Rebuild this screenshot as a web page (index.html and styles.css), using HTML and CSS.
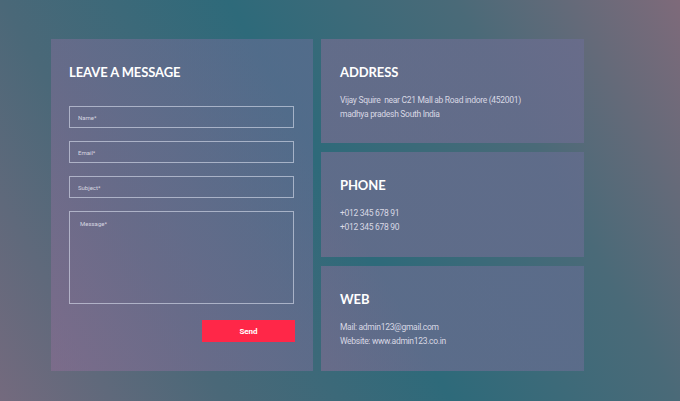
FILE: index.html
```html
<!DOCTYPE html>
<html>
<head>
<meta charset="utf-8">
<link rel="stylesheet" href="styles.css">
</head>
<body>
<div class="page">
  <div class="grid">
    <section class="panel form-panel">
      <h2 class="title">LEAVE A MESSAGE</h2>
      <form class="form">
        <input class="field" type="text" placeholder="Name*">
        <input class="field" type="text" placeholder="Email*">
        <input class="field" type="text" placeholder="Subject*">
        <textarea class="field area" placeholder="Message*"></textarea>
        <div class="actions"><button class="send" type="button">Send</button></div>
      </form>
    </section>
    <div class="side">
      <section class="panel info">
        <h2 class="title">ADDRESS</h2>
        <p class="text">Vijay Squire&nbsp; near C21 Mall ab Road indore (452001)<br>madhya pradesh South India</p>
      </section>
      <section class="panel info">
        <h2 class="title">PHONE</h2>
        <p class="text">+012 345 678 91<br>+012 345 678 90</p>
      </section>
      <section class="panel info">
        <h2 class="title">WEB</h2>
        <p class="text">Mail: admin123@gmail.com<br>Website: www.admin123.co.in</p>
      </section>
    </div>
  </div>
</div>
</body>
</html>
```
FILE: styles.css
```css
* { box-sizing: border-box; }
html, body { margin: 0; height: 100%; }
body {
  font-family: Roboto, "Liberation Sans", sans-serif;
  background: linear-gradient(61deg, #746a7e 0%, #4a6878 25%, #2e6a7a 50%, #4a6a78 75%, #7e6a7a 100%);
  overflow: hidden;
}
.page {
  width: 680px;
  height: 401px;
  padding: 39px 0 0 51px;
}
.grid {
  display: grid;
  grid-template-columns: 262px 263px;
  column-gap: 8px;
  height: 332px;
}
.panel {
  background: linear-gradient(60deg, rgba(140,110,150,0.55), rgba(110,110,155,0.5));
}
.title {
  margin: 0;
  color: #ffffff;
  font-family: Lato, "Open Sans", sans-serif;
  font-weight: 700;
  font-size: 13px;
  line-height: 16px;
  letter-spacing: -0.1px;
}
.form-panel {
  padding: 25px 18px 0 18px;
}
.form {
  margin-top: 26px;
  display: flex;
  flex-direction: column;
  gap: 13px;
}
.field {
  display: block;
  width: 225px;
  height: 22px;
  margin: 0;
  padding: 0 8px;
  background: transparent;
  border: 1px solid rgba(220,225,240,0.6);
  border-radius: 0;
  font-family: Roboto, sans-serif;
  font-size: 6px;
  color: #e0e0ea;
  outline: none;
}
.field::placeholder { color: #d6d6e0; }
.area {
  height: 93px;
  padding: 8px 10px;
  resize: none;
}
.actions {
  display: flex;
  justify-content: flex-end;
  margin-top: 3px;
  width: 226px;
}
.send {
  width: 93px;
  height: 22px;
  border: 0;
  background: #ff2748;
  color: #ffffff;
  font-family: Roboto, sans-serif;
  font-weight: 700;
  font-size: 8px;
  padding: 0;
}
.side {
  display: grid;
  grid-template-rows: 104px 105px 105px;
  row-gap: 9px;
}
.info {
  padding: 25px 19px 0 19px;
}
.text {
  margin: 13px 0 0;
  color: #d8d8e4;
  font-size: 8.5px;
  line-height: 14px;
  letter-spacing: -0.3px;
}
```
